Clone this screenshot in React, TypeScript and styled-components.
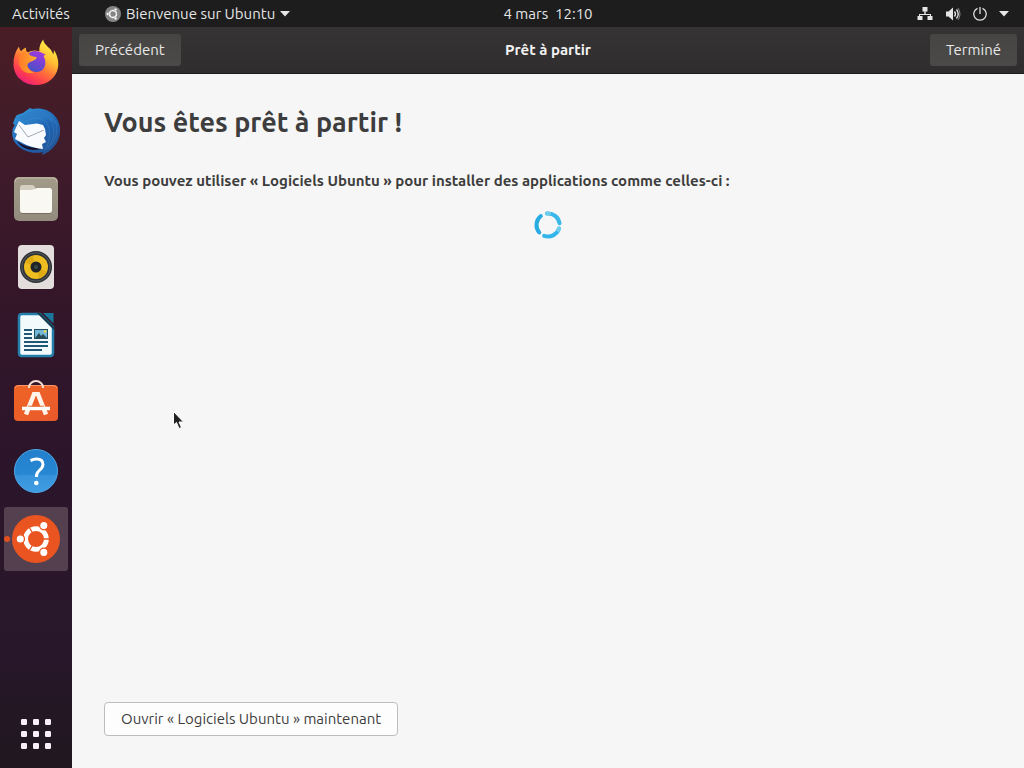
import React from "react";
import styled, { createGlobalStyle } from "styled-components";

const GlobalStyle = createGlobalStyle`
  * { box-sizing: border-box; }
  body {
    margin: 0;
    font-family: Ubuntu, "Noto Sans", "Open Sans", sans-serif;
    font-size: 15px;
    line-height: 20px;
    color: #3d3d3d;
  }
  button { font: inherit; color: inherit; cursor: default; }
  svg { display: block; flex: none; }
`;

const Desktop = styled.div`
  min-height: 100vh;
  display: flex;
  flex-direction: column;
  position: relative;
`;

const TopBar = styled.header`
  height: 27px;
  display: grid;
  grid-template-columns: 72px 1fr auto 1fr;
  align-items: center;
  background: #1d1d1d;
  color: #e6e6e6;
`;

const BarButton = styled.button<{ $indent?: number }>`
  display: flex;
  align-items: center;
  gap: 5px;
  padding: 0 0 0 ${(p) => p.$indent ?? 0}px;
  border: 0;
  background: none;
  white-space: nowrap;
`;

const StatusButton = styled(BarButton)`
  justify-self: end;
  gap: 12px;
  padding-right: 15px;
`;

const Workspace = styled.div`
  flex: 1;
  display: flex;
`;

const Dock = styled.nav`
  width: 72px;
  flex: none;
  padding: 4px 4px 2px;
  display: flex;
  flex-direction: column;
  gap: 4px;
  background: linear-gradient(#4a1d25 0%, #411c2a 15%, #351629 35%, #2b152b 60%, #28172a 85%, #1f171e 100%);
`;

const DockItem = styled.button<{ $active?: boolean; $last?: boolean }>`
  position: relative;
  height: 64px;
  padding: 0;
  border: 0;
  border-radius: 3px;
  display: flex;
  align-items: center;
  justify-content: center;
  margin-top: ${(p) => (p.$last ? "auto" : "0")};
  background: ${(p) => (p.$active ? "#54404f" : "none")};
`;

const RunningDot = styled.span`
  position: absolute;
  left: 0;
  top: 29px;
  width: 6px;
  height: 6px;
  border-radius: 50%;
  background: #e2501f;
`;

const Window = styled.section`
  flex: 1;
  min-width: 0;
  display: flex;
  flex-direction: column;
  background: #f6f6f6;
`;

const TitleBar = styled.header`
  height: 47px;
  padding: 0 7px;
  display: grid;
  grid-template-columns: 1fr auto 1fr;
  align-items: center;
  background: linear-gradient(#353334, #2f2d2e);
  border-bottom: 1px solid #1c1a1b;
  color: #f2f2f2;
`;

const WindowTitle = styled.h1`
  margin: 0;
  font-size: 15px;
  font-weight: 700;
`;

const TitleButton = styled.button<{ $end?: boolean }>`
  height: 32px;
  padding: 0 16px;
  border: 0;
  border-radius: 3px;
  justify-self: ${(p) => (p.$end ? "end" : "start")};
  background: linear-gradient(#464544, #4b4a48);
  color: #e8e8e8;
`;

const Content = styled.main`
  flex: 1;
  padding: 32px;
  display: flex;
  flex-direction: column;
  align-items: flex-start;
`;

const Heading = styled.h2`
  margin: 0;
  font-size: 27px;
  line-height: 32px;
  font-weight: 700;
`;

const Lead = styled.p`
  margin: 33px 0 20px;
  font-weight: 700;
`;

const SpinnerSlot = styled.div`
  align-self: center;
`;

const OpenButton = styled.button`
  height: 34px;
  margin-top: auto;
  padding: 0 16px;
  border: 1px solid #bdbdbd;
  border-radius: 4px;
  background: #fdfdfd;
`;

const Pointer = styled.div`
  position: absolute;
  left: 172px;
  top: 410px;
`;

const Caret = () => (
  <svg width="10" height="6" viewBox="0 0 10 6"><path d="M0 0h10L5 5.5z" fill="#e6e6e6" /></svg>
);

const friends: [number, number][] = [[-15.7, 0], [7.8, -13.4], [7.8, 13.4]];
const UbuntuLogo = ({ size, disc }: { size: number; disc: string }) => (
  <svg width={size} height={size} viewBox="-24 -24 48 48" aria-hidden="true">
    <circle r="24" fill={disc} />
    <circle r="10.4" fill="none" stroke="#fff" strokeWidth="4.8" />
    <path d="M0 0H15M0 0L-7.5 -13M0 0L-7.5 13" stroke={disc} strokeWidth="1.3" />
    {friends.map(([x, y]) => (
      <circle key={y} cx={x} cy={y} r="4.2" fill="#fff" stroke={disc} strokeWidth="1.3" />
    ))}
  </svg>
);

const Firefox = () => (
  <svg width="48" height="48" viewBox="0 0 48 48" aria-hidden="true">
    <defs>
      <linearGradient id="ffBody" x1=".85" y1=".1" x2=".3" y2="1">
        <stop offset="0" stopColor="#fff04a" /><stop offset=".32" stopColor="#ffbd32" />
        <stop offset=".58" stopColor="#ff7139" /><stop offset=".82" stopColor="#ff3b51" /><stop offset="1" stopColor="#e91e7b" />
      </linearGradient>
      <linearGradient id="ffFox" x1="0" y1="0" x2="1" y2="0">
        <stop offset="0" stopColor="#ff7a2a" /><stop offset="1" stopColor="#ffae2c" />
      </linearGradient>
      <linearGradient id="ffGlobe" x1=".8" y1="0" x2=".3" y2="1">
        <stop offset="0" stopColor="#a43ae0" /><stop offset=".5" stopColor="#7642d3" /><stop offset="1" stopColor="#4253c5" />
      </linearGradient>
    </defs>
    <path d="M7 7.5c.3 2.3 1 3.700 2.100 4.800 1.400-1.700 3-3 5-3.800-.6 2 .1 3.700 1.500 5 3.600-2.300 7.700-2.700 11.700-1.300C27 7.800 28.800 3.600 31.200.5c.6 4 3.600 6.200 6.900 9.400 1.500 1.600 2.500 3.700 3.100 5.500.6-1.100.8-2.600.6-4.400 3.400 4.600 5.300 11.400 4.200 17.500C44.300 38.800 35.500 46 24 46 11.500 46 2 37.500 1.500 26 1.300 19 3.100 12.500 7 7.500z" fill="url(#ffBody)" />
    <path d="M15 17C17 12.500 22 10.800 27 12.600L33.500 15.500 31.500 17C34.500 22 34 28 30 31.200 26 34.200 19.500 33.200 16.600 29.200 14 25.500 13.500 21 15 17z" fill="url(#ffGlobe)" />
    <path d="M8 16c2.500-3.400 5.400-4.300 8-2.800 1.200 3 3.500 4 8.800 5-.5 2.500-3.500 3.600-6.200 4.600-2.800 1.200-3.900 2.900-2.900 5.500 1 2.600 3.300 4.300 6.300 5.200-7 2-13.500-1.500-14.800-8C6.500 22 6.800 18.500 8 16z" fill="url(#ffFox)" />
  </svg>
);

const Thunderbird = () => (
  <svg width="48" height="48" viewBox="0 0 48 48" aria-hidden="true">
    <defs>
      <linearGradient id="tbBody" x1=".2" y1="0" x2=".9" y2="1">
        <stop offset="0" stopColor="#3196dc" /><stop offset=".5" stopColor="#2165b3" /><stop offset="1" stopColor="#24508f" />
      </linearGradient>
    </defs>
    <path d="M5 8L11 6 18 1 20 2C36-1 47 9 48 21 49 34 41 44 30 48L31 45C20 48 7 43 2 34-1 27 0 21 3 18L1 17C2 13 3 10 5 8z" fill="url(#tbBody)" />
    <path d="M5 34c5 4 14 8 26 7-8 4-21 2-26-7z" fill="#17112d" />
    <path d="M7 14L13 18 25 16.500 31 18 33 22 34 28 32 31 34 35 30 37 31 42C19 41 10 36 3 32L5 27 2 25z" fill="#fafbff" />
    <path d="M7 18l9 12 16-7" fill="none" stroke="#a3a9b3" />
    <path d="M5 10c8-1 10-8 21-7 11 1 19 8 20 18-4-8-12-11-20-9-6 1-9 5-14 2z" fill="#2d7cc2" opacity=".6" />
    <path d="M34 14c5 10 5 18-1 29M38 12c7 11 4 20-2 29M13 15c7-5 14-5 21 0M44 19c2 8-1 14-5 19" fill="none" stroke="#4b9bdb" strokeWidth=".8" opacity=".35" />
  </svg>
);

const Files = () => (
  <svg width="44" height="44" viewBox="0 0 44 44" aria-hidden="true">
    <defs><linearGradient id="filesBg" x1="0" y1="0" x2="0" y2="1"><stop stopColor="#a39b89" /><stop offset="1" stopColor="#938b7e" /></linearGradient></defs>
    <rect width="44" height="44" rx="5" fill="url(#filesBg)" />
    <path d="M1 5a4 4 0 0 1 4-4h34a4 4 0 0 1 4 4" fill="none" stroke="#c2bba9" />
    <path d="M6 13V10.500Q6 8 8.500 8H18Q20 8 20.800 10L22 13z" fill="#d4cfc0" />
    <path d="M6 13H17Q19 13 20.500 12 22 11 24 11H35.500Q38 11 38 13.500V33Q38 36 35 36H9Q6 36 6 33z" fill="#faf8f2" />
    <path d="M7 36.500H37" stroke="#77705f" />
  </svg>
);

const Rhythmbox = () => (
  <svg width="38" height="46" viewBox="0 0 38 46" aria-hidden="true">
    <rect x="1" y="1" width="36" height="44" rx="4" fill="#e4dddd" />
    <circle cx="19" cy="23" r="16" fill="#303338" />
    <circle cx="19" cy="23" r="14.200" fill="none" stroke="#55585c" strokeWidth="1" />
    <circle cx="19" cy="23" r="12" fill="#eebd20" />
    <path d="M19 23L8.500 18.500A11.500 11.500 0 0 1 16 12zM19 23l10.500 4.500A11.500 11.500 0 0 1 22 34z" fill="#dfab15" />
    <circle cx="19" cy="23" r="5.500" fill="#202328" />
    <circle cx="19" cy="23" r="2" fill="#394b40" />
  </svg>
);

const Writer = () => (
  <svg width="38" height="46" viewBox="0 0 38 46" aria-hidden="true">
    <path d="M5 2H23L36 15V41Q36 44 33 44H5Q2 44 2 41V5Q2 2 5 2z" fill="#f2fafc" stroke="#2480aa" strokeWidth="2.500" />
    <path d="M23 1L37 15V18L20 1z" fill="#15384b" />
    <path d="M26 1H36.500V11.500z" fill="#1b789c" />
    <path d="M7 18h8M7 22h8M7 26h8M7 30h24M7 34h24M7 38h18" stroke="#1e5874" strokeWidth="1.800" />
    <rect x="17.500" y="17.500" width="13" height="9" fill="#73b7d8" stroke="#1e4c63" />
    <circle cx="28" cy="19.500" r="1.400" fill="#e3d45b" />
    <path d="M18 26l4-5 2 3 2-2 4 4z" fill="#294a57" />
  </svg>
);

const Software = () => (
  <svg width="44" height="48" viewBox="0 0 44 48" aria-hidden="true">
    <defs><linearGradient id="swBg" x1="0" y1="0" x2="1" y2="1"><stop stopColor="#ef6425" /><stop offset="1" stopColor="#e8592b" /></linearGradient></defs>
    <rect y="6" width="44" height="36" rx="4" fill="url(#swBg)" />
    <path d="M1 9Q2 6.500 5 6.500H39Q42 6.500 43 9" fill="none" stroke="#fa9a6b" />
    <path d="M15 9V8.500a7 6.500 0 0 1 14 0V9" fill="none" stroke="#f7ded4" strokeWidth="2" />
    <path d="M20.500 14L12 35.500M23.500 14L32 35.500" stroke="#fff3ea" strokeWidth="4.500" />
    <path d="M18.500 13h7v4h-7z" fill="#fff3ea" />
    <path d="M8 29.500H36" stroke="#fff" strokeWidth="3.500" />
    <path d="M14 27.200h16" stroke="#e97740" />
  </svg>
);

const Help = () => (
  <svg width="44" height="44" viewBox="0 0 44 44" aria-hidden="true">
    <defs><linearGradient id="helpBg" x1="0" y1="0" x2="0" y2="1"><stop stopColor="#237fcc" /><stop offset=".58" stopColor="#2787d2" /><stop offset=".6" stopColor="#3794dc" /><stop offset="1" stopColor="#3f9de3" /></linearGradient></defs>
    <circle cx="22" cy="22" r="21.500" fill="url(#helpBg)" stroke="#4ca9e8" />
    <path d="M16.500 11.500q3.500-1.500 6-1.500c4.500 0 6.500 2.200 6.500 5.500 0 5-6.500 6-6.500 11v1.500" fill="none" stroke="#fff" strokeWidth="3" />
    <circle cx="22.300" cy="34" r="2.300" fill="#fff" />
  </svg>
);

const AppGrid = () => (
  <svg width="30" height="30" viewBox="0 0 30 30" fill="#f8eef8" aria-hidden="true">
    {[0, 12, 24].flatMap((y) => [0, 12, 24].map((x) => <rect key={`${x}-${y}`} x={x} y={y} width="6" height="6" rx="1.200" />))}
  </svg>
);

const Network = () => (
  <svg width="16" height="14" viewBox="0 0 16 14" fill="#e6e6e6" aria-hidden="true">
    <path d="M5.500 0h5v4.500H8.700V7H14v2h1.500v4h-5V9H13V8H3v1h2.500v4h-5V9H2V7h5.300V4.500H5.500z" />
  </svg>
);

const Volume = () => (
  <svg width="16" height="14" viewBox="0 0 16 14" aria-hidden="true">
    <path d="M1 4.500h2.500L8 .5v13l-4.500-4H1z" fill="#e6e6e6" />
    <path d="M9.500 4.500q2 2.500 0 5M11.500 2.500q3.500 4.500 0 9" fill="none" stroke="#e6e6e6" strokeWidth="1.300" />
    <path d="M13 1q4 6 0 12" fill="none" stroke="#8a8a8a" />
  </svg>
);

const Power = () => (
  <svg width="14" height="14" viewBox="0 0 14 14" fill="none" stroke="#dcdcdc" strokeWidth="1.300" aria-hidden="true">
    <path d="M4.500 1.300a6.200 6.200 0 1 0 5 0M7 0v7" />
  </svg>
);

const Spinner = () => (
  <svg width="28" height="28" viewBox="-14 -14 28 28" fill="none" strokeWidth="4" strokeLinecap="round" role="img" aria-label="Chargement">
    <path d="M-1-11.500A11.500 11.500 0 0 1 11.500-1.800" stroke="#38b7e8" />
    <path d="M11 3.500A11.500 11.500 0 0 1-3.800 10.900" stroke="#32b5eb" />
    <path d="M-8.700 7.500A11.500 11.500 0 0 1-7.200-9" stroke="#28abe2" />
    <path d="M-1-11.500L1-11.500M11 3.500L10.300 5" stroke="#6fcdec" />
  </svg>
);

const dockApps = [
  { name: "Firefox", icon: <Firefox /> },
  { name: "Thunderbird", icon: <Thunderbird /> },
  { name: "Fichiers", icon: <Files /> },
  { name: "Rhythmbox", icon: <Rhythmbox /> },
  { name: "LibreOffice Writer", icon: <Writer /> },
  { name: "Logiciels Ubuntu", icon: <Software /> },
  { name: "Aide", icon: <Help /> },
  { name: "Bienvenue sur Ubuntu", icon: <UbuntuLogo size={48} disc="#e95420" />, active: true },
];

export default function App() {
  return (
    <Desktop>
      <GlobalStyle />
      <TopBar>
        <BarButton $indent={12}>Activités</BarButton>
        <BarButton $indent={33}>
          <UbuntuLogo size={16} disc="#858585" />
          Bienvenue sur Ubuntu
          <Caret />
        </BarButton>
        <BarButton>4 mars&nbsp; 12:10</BarButton>
        <StatusButton aria-label="Système">
          <Network />
          <Volume />
          <Power />
          <Caret />
        </StatusButton>
      </TopBar>
      <Workspace>
        <Dock>
          {dockApps.map((app) => (
            <DockItem key={app.name} aria-label={app.name} $active={app.active}>
              {app.active && <RunningDot />}
              {app.icon}
            </DockItem>
          ))}
          <DockItem aria-label="Afficher les applications" $last>
            <AppGrid />
          </DockItem>
        </Dock>
        <Window>
          <TitleBar>
            <TitleButton>Précédent</TitleButton>
            <WindowTitle>Prêt à partir</WindowTitle>
            <TitleButton $end>Terminé</TitleButton>
          </TitleBar>
          <Content>
            <Heading>Vous êtes prêt à partir !</Heading>
            <Lead>Vous pouvez utiliser « Logiciels Ubuntu » pour installer des applications comme celles-ci :</Lead>
            <SpinnerSlot><Spinner /></SpinnerSlot>
            <OpenButton>Ouvrir « Logiciels Ubuntu » maintenant</OpenButton>
          </Content>
        </Window>
      </Workspace>
      <Pointer>
        <svg width="14" height="20" viewBox="0 0 14 20" aria-hidden="true">
          <path d="M1.500 1.500V15l3-2.500 2.500 6 2.500-1-2.500-5.500h4.500z" fill="#222" stroke="#fff" strokeWidth="1" />
        </svg>
      </Pointer>
    </Desktop>
  );
}
